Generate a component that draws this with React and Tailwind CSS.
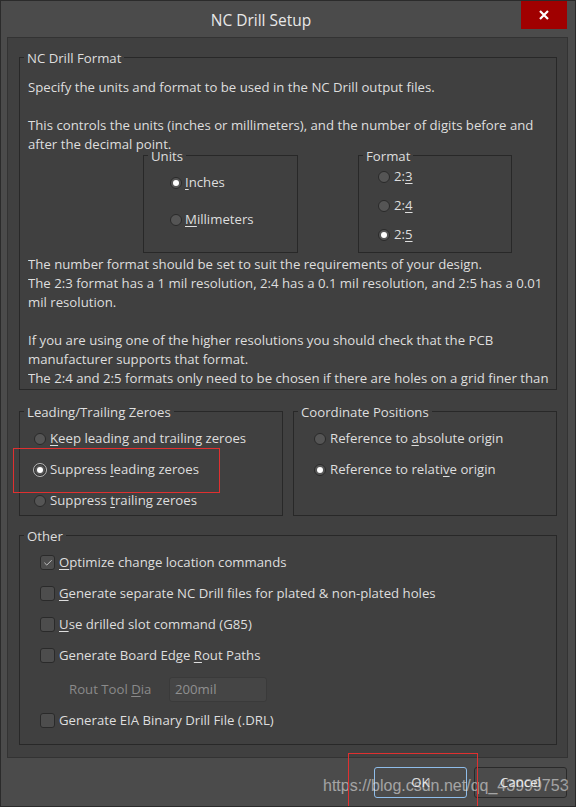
import React from 'react';
import { Check } from 'lucide-react';

const Group = ({ title, className = '', children }) => (
  <fieldset className={`border border-[#282828] min-w-0 ${className}`}>
    <legend className="ml-[4px] px-[3px] leading-[16px]">
      <span className="relative top-[1px]">{title}</span>
    </legend>
    {children}
  </fieldset>
);

const Radio = ({ checked, focused }) => (
  <span
    className={`w-[12px] h-[12px] shrink-0 rounded-full border border-[#2a2a2a] bg-[#555555] flex items-center justify-center ${
      focused ? 'outline outline-1 outline-[#b8b8b8]' : ''
    }`}
  >
    {checked && <span className="w-[6px] h-[6px] rounded-full bg-white" />}
  </span>
);

const RadioRow = ({ checked, focused, gap = 'gap-[4px]', children }) => (
  <div className={`flex items-center h-[19px] ${gap}`}>
    <Radio checked={checked} focused={focused} />
    <span className="whitespace-nowrap">{children}</span>
  </div>
);

const CheckRow = ({ checked, className = '', children }) => (
  <div className={`flex items-center h-[19px] gap-[4px] ${className}`}>
    <span className="w-[15px] h-[15px] shrink-0 rounded-[3px] border border-[#2a2a2a] bg-[#4d4d4d] flex items-center justify-center">
      {checked && <Check size={10} strokeWidth={2} color="#dadada" />}
    </span>
    <span className="whitespace-nowrap">{children}</span>
  </div>
);

const U = ({ children }) => <span className="underline underline-offset-[2px]">{children}</span>;

export default function App() {
  return (
    <div className="relative w-[576px] h-[807px] overflow-hidden bg-[#4b4b4b] border border-[#2b2b2b] flex flex-col font-['Open_Sans',sans-serif] text-[13.2px] text-[#dedede]">
      {/* title bar */}
      <div className="flex h-[36px] shrink-0">
        <div className="flex-1 text-center text-[15.5px] leading-[38px] text-[#e8e8e8]">NC Drill Setup</div>
        <button className="w-[46px] h-[28px] mr-[8px] bg-[#a00000] flex items-center justify-center">
          <svg width="10" height="10" viewBox="0 0 10 10">
            <path d="M1 1L9 9M9 1L1 9" stroke="white" strokeWidth="2.2" />
          </svg>
        </button>
      </div>

      {/* main panel */}
      <div className="ml-[6px] mr-[7px] border border-[#333333] bg-[#404040] pt-[11px] pl-[11px] pr-[10px] pb-[12px] flex flex-col leading-[19px]">
        <Group title="NC Drill Format">
          <div className="pl-[8px] pt-[13px] whitespace-nowrap">
            <p>Specify the units and format to be used in the NC Drill output files.</p>
            <p className="h-[19px]" />
            <p>This controls the units (inches or millimeters), and the number of digits before and</p>
            <p>after the decimal point.</p>

            <div className="flex mt-[-7px] ml-[115px] gap-[60px]">
              <Group title="Units" className="w-[155px]">
                <div className="h-[89px] pl-[26px] pt-[10px] flex flex-col gap-[18px]">
                  <RadioRow checked gap="gap-[3px]"><U>I</U>nches</RadioRow>
                  <RadioRow gap="gap-[3px]"><U>M</U>illimeters</RadioRow>
                </div>
              </Group>
              <Group title="Format" className="w-[154px]">
                <div className="h-[89px] pl-[19px] pt-[4px] flex flex-col gap-[10px]">
                  <RadioRow>2:<U>3</U></RadioRow>
                  <RadioRow>2:<U>4</U></RadioRow>
                  <RadioRow checked>2:<U>5</U></RadioRow>
                </div>
              </Group>
            </div>

            <div className="mt-[2px] h-[134px] overflow-hidden">
              <p>The number format should be set to suit the requirements of your design.</p>
              <p>The 2:3 format has a 1 mil resolution, 2:4 has a 0.1 mil resolution, and 2:5 has a 0.01</p>
              <p>mil resolution.</p>
              <p className="h-[19px]" />
              <p>If you are using one of the higher resolutions you should check that the PCB</p>
              <p>manufacturer supports that format.</p>
              <p>The 2:4 and 2:5 formats only need to be chosen if there are holes on a grid finer than</p>
              <p>1 mil.</p>
            </div>
          </div>
        </Group>

        <div className="flex gap-[10px] mt-[13px]">
          <Group title="Leading/Trailing Zeroes" className="flex-1">
            <div className="h-[96px] pl-[14px] pt-[10px] flex flex-col gap-[12px]">
              <RadioRow><U>K</U>eep leading and trailing zeroes</RadioRow>
              <RadioRow checked focused>Suppress <U>l</U>eading zeroes</RadioRow>
              <RadioRow>Suppress <U>t</U>railing zeroes</RadioRow>
            </div>
          </Group>
          <Group title="Coordinate Positions" className="flex-1">
            <div className="h-[96px] pl-[20px] pt-[10px] flex flex-col gap-[12px]">
              <RadioRow>Reference to <U>a</U>bsolute origin</RadioRow>
              <RadioRow checked>Reference to relati<U>v</U>e origin</RadioRow>
            </div>
          </Group>
        </div>

        <Group title="Other" className="mt-[11px]">
          <div className="pl-[20px] pt-[10px] pb-[14px] flex flex-col">
            <CheckRow checked><U>O</U>ptimize change location commands</CheckRow>
            <CheckRow className="mt-[12px]"><U>G</U>enerate separate NC Drill files for plated &amp; non-plated holes</CheckRow>
            <CheckRow className="mt-[12px]"><U>U</U>se drilled slot command (G85)</CheckRow>
            <CheckRow className="mt-[12px]">Generate Board Edge <U>R</U>out Paths</CheckRow>
            <div className="flex items-center mt-[12px] h-[25px] pl-[29px] text-[#8a8a8a]">
              <span className="w-[100px]">Rout Tool <U>D</U>ia</span>
              <div className="w-[98px] h-[25px] rounded-[3px] border border-[#3a3a3a] bg-[#454545] pl-[5px] flex items-center text-[#909090]">
                200mil
              </div>
            </div>
            <CheckRow className="mt-[9px]">Generate EIA Binary Drill File (.DRL)</CheckRow>
          </div>
        </Group>
      </div>

      {/* buttons */}
      <div className="flex justify-end gap-[7px] mt-[9px] pr-[8px]">
        <button className="w-[93px] h-[31px] rounded-[3px] border border-[#8fbdea] bg-[#4b4b4b] text-[#e0e0e0]">OK</button>
        <button className="w-[93px] h-[31px] rounded-[3px] border border-[#2a2a2a] bg-[#4b4b4b] text-[#e0e0e0]">Cancel</button>
      </div>

      {/* watermark + annotations */}
      <div className="absolute left-[322px] top-[775px] font-['Liberation_Sans',sans-serif] text-[16px] leading-[20px] text-white/50 pointer-events-none">
        https://blog.csdn.net/qq_43999753
      </div>
      <div className="absolute left-[12px] top-[447px] w-[207px] h-[45px] border border-[#e03030] pointer-events-none" />
      <div className="absolute left-[347px] top-[752px] w-[130px] h-[70px] border border-[#e03030] pointer-events-none" />
    </div>
  );
}
